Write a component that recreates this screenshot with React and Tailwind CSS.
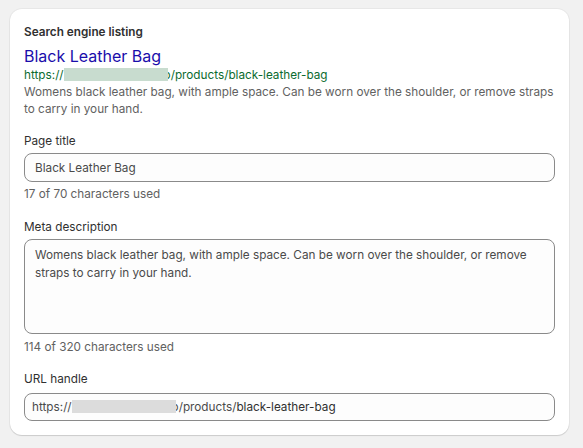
import React from 'react';

const font = { fontFamily: 'Inter, "Noto Sans", sans-serif' };

const Redacted = ({ w, color }) => (
    <span className={`relative z-10 inline-block h-[13px] align-[-2px] ${w} ${color}`}></span>
);

export default function App() {
    return (
        <div className="min-h-[448px] w-[583px] bg-[#f1f1f1] pt-[9px] pl-[10px]" style={font}>
            <div className="w-[559px] h-[426px] rounded-[12px] bg-white shadow-[0_1px_1px_rgba(0,0,0,0.12),0_0_0_1px_rgba(0,0,0,0.04)] px-[14px] pt-[15px] text-[11.75px] leading-[17px] text-[#303030]">
                <div className="font-semibold">Search engine listing</div>

                <div className="mt-[5px] text-[16px] leading-[20px] text-[#1a0dab]">Black Leather Bag</div>
                <div className="pt-[1px] text-[#0b6b2f] whitespace-nowrap">
                    https://<Redacted w="w-[104px]" color="bg-[#c8dccf]" /><span className="-ml-[4px]">o/products/black-leather-bag</span>
                </div>
                <p className="text-[#616161]">
                    Womens black leather bag, with ample space. Can be worn over the shoulder, or remove straps to carry in your hand.
                </p>

                <label className="block mt-[14px] pt-[1px]">Page title</label>
                <div className="mt-[3px] h-[29px] rounded-[8px] border border-[#8a8a8a] bg-[#fdfdfd] pl-[10px] pt-[6px] text-[#4a4a4a]">
                    Black Leather Bag
                </div>
                <div className="mt-[3px] pt-[1px] text-[#616161]">17 of 70 characters used</div>

                <label className="block mt-[15px] pt-[1px]">Meta description</label>
                <div className="mt-[3px] h-[95px] rounded-[8px] border border-[#8a8a8a] bg-[#fdfdfd] pl-[10px] pr-[12px] pt-[6px] leading-[18px] text-[#4a4a4a]">
                    Womens black leather bag, with ample space. Can be worn over the shoulder, or remove straps to carry in your hand.
                </div>
                <div className="mt-[4px] pt-[1px] text-[#616161]">114 of 320 characters used</div>

                <label className="block mt-[14px] pt-[1px]">URL handle</label>
                <div className="mt-[5px] h-[28px] rounded-[8px] border border-[#8a8a8a] bg-[#fdfdfd] pl-[7px] pt-[5px] text-[#4a4a4a] whitespace-nowrap">
                    https://<Redacted w="w-[104px]" color="bg-[#dcdcdc]" /><span className="-ml-[4px]">o/products/<span className="text-[#303030]">black-leather-bag</span></span>
                </div>
            </div>
        </div>
    );
}
